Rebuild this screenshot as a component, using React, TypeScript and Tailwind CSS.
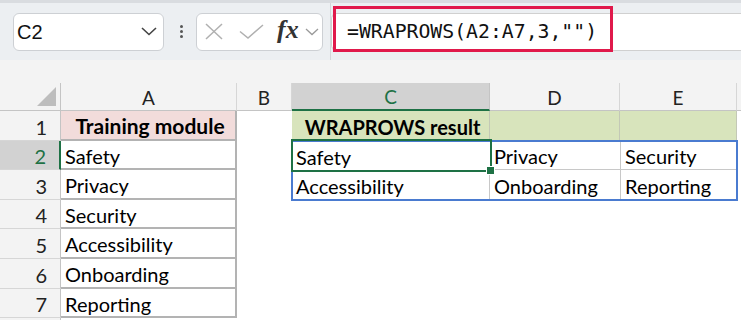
import React from "react";

const cellFont = { fontFamily: "Lato, 'Open Sans', sans-serif" };

function RowHead({ n, sel }: { n: number; sel?: boolean }) {
  return (
    <div
      className={
        "flex items-center justify-end pr-[13px] pt-[2px] text-[20px] border-b border-[#d6d6d6] " +
        (sel
          ? "bg-[#d2d2d2] text-[#1e7145] border-r-2 border-r-[#1e7145]"
          : "bg-[#f3f3f3] text-[#222] border-r border-r-[#c4c4c4]")
      }
    >
      {n}
    </div>
  );
}

function ACell({ children, pink }: { children?: React.ReactNode; pink?: boolean }) {
  return (
    <div
      className={
        "flex items-center pl-[4px] pt-[2px] text-black border-r-2 border-b-2 border-[#b3b3b3] whitespace-nowrap overflow-hidden " +
        (pink ? "bg-[#f2dcdb] justify-center font-bold text-[21px]" : "bg-white text-[20px]")
      }
    >
      {children}
    </div>
  );
}

function Blank() {
  return <div className="bg-white" />;
}

function DCell({
  children,
  cls = "",
}: {
  children?: React.ReactNode;
  cls?: string;
}) {
  return (
    <div
      className={
        "flex items-center pl-[4px] pt-[2px] text-[20px] text-black whitespace-nowrap overflow-hidden " +
        cls
      }
    >
      {children}
    </div>
  );
}

export default function App() {
  return (
    <div
      className="relative w-[741px] h-[320px] overflow-hidden bg-white"
      style={cellFont}
    >
      {/* top band */}
      <div className="h-[3px] bg-[#d9dce0]" />
      {/* toolbar */}
      <div className="flex items-center h-[57px] bg-[#eceff2]">
        <div
          className="ml-[13px] w-[151px] h-[38px] rounded-[6px] border border-[#cdd0d4] bg-white flex items-center pl-[3px] pr-[6px] text-[20px] text-[#111]"
          style={{ fontFamily: "'Liberation Sans', Arial, sans-serif" }}
        >
          <span className="flex-1">C2</span>
          <svg width="16" height="9" viewBox="0 0 16 9">
            <polyline
              points="1,1 8,7.5 15,1"
              fill="none"
              stroke="#444"
              strokeWidth="1.6"
            />
          </svg>
        </div>
        <div className="ml-[15px] flex flex-col gap-[2px] w-[4px] items-center">
          <div className="w-[3px] h-[3px] rounded-full bg-[#555]" />
          <div className="w-[3px] h-[3px] rounded-full bg-[#555]" />
          <div className="w-[3px] h-[3px] rounded-full bg-[#555]" />
        </div>
        <div className="ml-[13px] w-[127px] h-[38px] rounded-[6px] border border-[#cdd0d4] bg-white flex items-center pl-[8px]">
          <svg width="18" height="17" viewBox="0 0 18 17">
            <line x1="1" y1="1" x2="17" y2="16" stroke="#b0b0b0" strokeWidth="1.5" />
            <line x1="17" y1="1" x2="1" y2="16" stroke="#b0b0b0" strokeWidth="1.5" />
          </svg>
          <svg className="ml-[16px]" width="25" height="15" viewBox="0 0 25 15">
            <polyline
              points="1,7.5 9,14 24,1"
              fill="none"
              stroke="#b0b0b0"
              strokeWidth="1.5"
            />
          </svg>
          <span
            className="ml-[13px] text-[26px] italic font-semibold text-[#333] leading-none -mt-[3px]"
            style={{ fontFamily: "'Liberation Serif', 'Times New Roman', serif" }}
          >
            fx
          </span>
          <svg className="ml-[6px]" width="14" height="8" viewBox="0 0 14 8">
            <polyline
              points="1,1 7,6.5 13,1"
              fill="none"
              stroke="#9a9a9a"
              strokeWidth="1.3"
            />
          </svg>
        </div>
        <div className="ml-[7px] self-stretch w-px bg-[#d3d6da]" />
        <div
          className="flex-1 h-[38px] bg-white border-y border-l border-[#d0d0d0] rounded-l-[6px] flex items-center pl-[15px] text-[19.8px] text-[#111]"
          style={{ fontFamily: "'DejaVu Sans Mono', 'Liberation Mono', monospace" }}
        >
          =WRAPROWS(A2:A7,3,"")
        </div>
      </div>
      {/* red highlight annotation */}
      <div className="absolute left-[333px] top-[6px] w-[280px] h-[46px] border-[3px] border-[#e0194b]" />

      {/* gap under toolbar */}
      <div className="h-[23px] bg-[#f3f3f3]" />

      {/* sheet grid */}
      <div className="relative grid grid-cols-[61px_176px_55px_198px_130px_117px_1fr] grid-rows-[28px_30px_29px_30px_29px_30px_30px_29px_10px]">
        {/* header row */}
        <div className="bg-[#f3f3f3] border-r border-b border-[#c4c4c4] flex items-end justify-end pr-[4px] pb-[4px]">
          <svg width="19" height="19" viewBox="0 0 19 19">
            <polygon points="19,0 19,19 0,19" fill="#bdbdbd" />
          </svg>
        </div>
        <div className="bg-[#f3f3f3] border-r border-b border-r-[#d6d6d6] border-b-[#c4c4c4] flex items-center justify-center pt-[3px] text-[19px] text-[#222]">A</div>
        <div className="bg-[#f3f3f3] border-r border-b border-r-[#d6d6d6] border-b-[#c4c4c4] flex items-center justify-center pt-[3px] text-[19px] text-[#222]">B</div>
        <div className="bg-[#d2d2d2] border-r border-r-[#c4c4c4] border-b-2 border-b-[#1e7145] flex items-center justify-center pt-[3px] text-[19px] text-[#1e7145]">C</div>
        <div className="bg-[#f3f3f3] border-r border-b border-r-[#d6d6d6] border-b-[#c4c4c4] flex items-center justify-center pt-[3px] text-[19px] text-[#222]">D</div>
        <div className="bg-[#f3f3f3] border-r border-b border-r-[#d6d6d6] border-b-[#c4c4c4] flex items-center justify-center pt-[3px] text-[19px] text-[#222]">E</div>
        <div className="bg-[#f3f3f3] border-b border-[#c4c4c4]" />

        {/* row 1 */}
        <RowHead n={1} />
        <ACell pink>Training module</ACell>
        <Blank />
        <DCell cls="bg-[#d8e4bc] justify-center pl-0 font-bold text-[20px] border-r border-[#c3c8b6]">WRAPROWS result</DCell>
        <DCell cls="bg-[#d8e4bc] border-r border-[#c3c8b6]" />
        <DCell cls="bg-[#d8e4bc] border-r border-[#c3c8b6]" />
        <Blank />

        {/* row 2 */}
        <RowHead n={2} sel />
        <ACell>Safety</ACell>
        <Blank />
        <DCell cls="bg-white">Safety</DCell>
        <DCell cls="bg-white border-b border-[#c8c8c8]">Privacy</DCell>
        <DCell cls="bg-white border-l border-b border-[#c8c8c8]">Security</DCell>
        <Blank />

        {/* row 3 */}
        <RowHead n={3} />
        <ACell>Privacy</ACell>
        <Blank />
        <DCell cls="bg-white border-r border-[#c8c8c8]">Accessibility</DCell>
        <DCell cls="bg-white">Onboarding</DCell>
        <DCell cls="bg-white border-l border-[#c8c8c8]">Reporting</DCell>
        <Blank />

        {/* row 4 */}
        <RowHead n={4} />
        <ACell>Security</ACell>
        <Blank />
        <Blank />
        <Blank />
        <Blank />
        <Blank />

        {/* row 5 */}
        <RowHead n={5} />
        <ACell>Accessibility</ACell>
        <Blank />
        <Blank />
        <Blank />
        <Blank />
        <Blank />

        {/* row 6 */}
        <RowHead n={6} />
        <ACell>Onboarding</ACell>
        <Blank />
        <Blank />
        <Blank />
        <Blank />
        <Blank />

        {/* row 7 */}
        <RowHead n={7} />
        <ACell>Reporting</ACell>
        <Blank />
        <Blank />
        <Blank />
        <Blank />
        <Blank />

        {/* row 8 partial */}
        <div className="bg-[#f3f3f3] border-r border-[#c4c4c4]" />
        <Blank />
        <Blank />
        <Blank />
        <Blank />
        <Blank />
        <Blank />

        {/* range border overlay (C2:E3) */}
        <div className="absolute left-[291px] top-[57px] w-[447px] h-[61px] border-2 border-[#4a7bd0] pointer-events-none" />
        {/* active cell overlay (C2) */}
        <div className="absolute left-[291px] top-[56px] w-[201px] h-[33px] border-2 border-[#1e7145] pointer-events-none" />
        {/* fill handle */}
        <div className="absolute left-[487px] top-[84px] w-[7px] h-[7px] bg-[#1e7145] border border-white box-content -translate-x-[1px] -translate-y-[1px]" />
      </div>
    </div>
  );
}
